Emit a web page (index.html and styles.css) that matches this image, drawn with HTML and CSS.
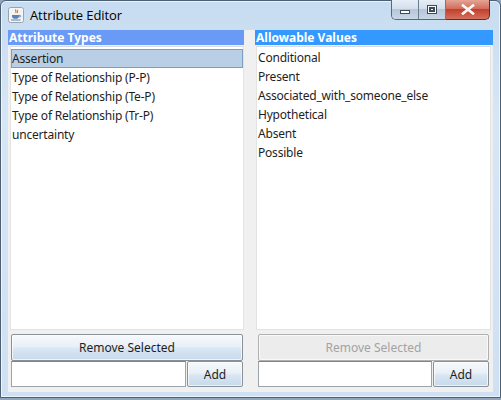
FILE: index.html
```html
<!DOCTYPE html>
<html>
<head>
<meta charset="utf-8">
<link rel="stylesheet" href="styles.css">
</head>
<body>
<div class="window">
  <div class="titlebar">
    <div class="app-icon">
      <svg width="16" height="16" viewBox="0 0 16 16">
        <rect x="0.5" y="0.5" width="15" height="15" rx="2" fill="#f4f4f4" stroke="#9aa4ae"/>
        <path d="M8 2.5c-1.5 1.2 1 2-0.3 3.6M9.6 3c-1 1 0.8 1.6-0.2 2.8" stroke="#e07020" stroke-width="1.1" fill="none"/>
        <path d="M4 8h7v1.2c0 1.6-1.4 2.6-3.5 2.6S4 10.8 4 9.2z" fill="#5a82b8"/>
        <path d="M11 8.4h1c1 0 1 1.6 0 1.6h-1" stroke="#5a82b8" stroke-width="0.9" fill="none"/>
        <path d="M3 13h9.5" stroke="#5a82b8" stroke-width="1"/>
      </svg>
    </div>
    <div class="title">Attribute Editor</div>
    <div class="caption-buttons">
      <div class="cap-group">
        <div class="cap-btn cap-min"><span class="min-glyph"></span></div>
        <div class="cap-btn cap-max"><span class="max-glyph"></span></div>
      </div>
      <div class="cap-close">
        <svg width="14" height="11" viewBox="0 0 14 11">
          <path d="M2 1.5l10 8M12 1.5l-10 8" stroke="#fff" stroke-width="2.6" stroke-linecap="square"/>
          <path d="M2 1.5l10 8M12 1.5l-10 8" stroke="#f4f4f4" stroke-width="1.4"/>
        </svg>
      </div>
    </div>
  </div>
  <div class="client">
    <div class="panel panel-left">
      <div class="panel-header header-left">Attribute Types</div>
      <div class="list">
        <div class="row selected">Assertion</div>
        <div class="row">Type of Relationship (P-P)</div>
        <div class="row">Type of Relationship (Te-P)</div>
        <div class="row">Type of Relationship (Tr-P)</div>
        <div class="row">uncertainty</div>
      </div>
      <div class="controls">
        <button class="btn btn-remove">Remove Selected</button>
        <div class="add-row">
          <input class="field" type="text">
          <button class="btn btn-add">Add</button>
        </div>
      </div>
    </div>
    <div class="panel panel-right">
      <div class="panel-header header-right">Allowable Values</div>
      <div class="list list-right">
        <div class="row">Conditional</div>
        <div class="row">Present</div>
        <div class="row">Associated_with_someone_else</div>
        <div class="row">Hypothetical</div>
        <div class="row">Absent</div>
        <div class="row">Possible</div>
      </div>
      <div class="controls">
        <button class="btn btn-remove disabled">Remove Selected</button>
        <div class="add-row">
          <input class="field" type="text">
          <button class="btn btn-add">Add</button>
        </div>
      </div>
    </div>
  </div>
</div>
</body>
</html>
```

FILE: styles.css
```css
* { box-sizing: border-box; }
html, body {
  margin: 0;
  padding: 0;
  width: 501px;
  height: 400px;
  overflow: hidden;
  background: #8fa6bd;
  font-family: "Noto Sans", "DejaVu Sans", sans-serif;
}
.window {
  width: 501px;
  height: 398px;
  background: linear-gradient(180deg, #c7dcf1 0%, #d7e6f5 30%, #cfe0f2 100%);
  border: 1px solid #4d5f72;
  border-radius: 6px 6px 0 0;
  display: flex;
  flex-direction: column;
  box-shadow: inset 0 0 0 1px rgba(255,255,255,0.6);
}
.titlebar {
  height: 29px;
  display: flex;
  align-items: flex-start;
  padding-left: 7px;
  position: relative;
}
.app-icon {
  margin-top: 5px;
  width: 16px;
  height: 16px;
}
.title {
  margin-left: 6px;
  margin-top: 5px;
  font-family: "Open Sans", "Noto Sans", sans-serif;
  font-size: 13px;
  color: #000;
  letter-spacing: -0.1px;
}
.caption-buttons {
  position: absolute;
  top: -1px;
  right: 10px;
  display: flex;
  height: 20px;
}
.cap-group {
  display: flex;
  border: 1px solid #5a6878;
  border-top: none;
  border-right: none;
  border-radius: 0 0 0 5px;
  overflow: hidden;
}
.cap-btn {
  width: 27px;
  height: 19px;
  background: linear-gradient(180deg, #e6eef7 0%, #d3dfec 45%, #b7c7d9 50%, #c8d6e6 100%);
  border-right: 1px solid #6d7c8c;
  display: flex;
  align-items: center;
  justify-content: center;
}
.min-glyph {
  width: 10px;
  height: 4px;
  margin-top: 5px;
  background: #fff;
  border: 1px solid #3d4a58;
}
.max-glyph {
  width: 10px;
  height: 9px;
  background: #fff;
  border: 1px solid #3d4a58;
  box-shadow: inset 0 0 0 1px #fff, inset 0 0 0 3px #3d4a58;
}
.cap-close {
  width: 44px;
  height: 20px;
  background: linear-gradient(180deg, #e3a595 0%, #d26d5c 45%, #c2402d 50%, #d5705c 100%);
  border: 1px solid #5a3028;
  border-top: none;
  border-left: none;
  border-radius: 0 0 5px 0;
  display: flex;
  align-items: center;
  justify-content: center;
}
.client {
  margin: 0 7px;
  height: 362px;
  background: #f0f0f0;
  display: grid;
  grid-template-columns: 236px 238px;
  column-gap: 11px;
  border: 0;
}
.panel {
  display: flex;
  flex-direction: column;
  min-height: 0;
}
.panel-header {
  height: 15px;
  color: #fff;
  font-weight: bold;
  font-size: 12px;
  line-height: 15px;
  padding-left: 1px;
  white-space: nowrap;
}
.header-left { background: #699af5; }
.header-right { background: #3399ff; }
.list {
  flex: 1;
  margin: 1px 0 4px 2px;
  background: #fff;
  border: 1px solid #e3e3e3;
  border-top: 1px solid #d9d9d9;
  padding: 2px 0 0 0;
  font-size: 12px;
  letter-spacing: -0.2px;
  color: #1e1e1e;
}
.list-right {
  margin: 1px 2px 4px 1px;
  padding-top: 1px;
}
.row {
  height: 19px;
  line-height: 17px;
  padding-left: 0;
  border: 1px solid transparent;
  white-space: nowrap;
}
.selected {
  background: #b8cfe5;
  border-color: #7f9cc3;
}
.controls {
  display: flex;
  flex-direction: column;
  padding: 0 1px 5px 3px;
}
.panel-right .controls { padding: 0 4px 5px 3px; }
.btn {
  font-family: "Noto Sans", "DejaVu Sans", sans-serif;
  font-size: 12px;
  color: #1e1e1e;
  border: 1px solid #8a9097;
  border-radius: 2px;
  background: linear-gradient(180deg, #f6f9fc 0%, #e9f0f7 45%, #d9e6f2 55%, #c6d9ec 100%);
  box-shadow: inset 0 0 0 1px rgba(255,255,255,0.7);
  padding: 0;
  margin: 0;
}
.btn-remove {
  height: 27px;
  width: 100%;
}
.btn.disabled {
  background: #ececec;
  color: #a3a3a3;
  border-color: #b0b0b0;
}
.add-row {
  display: flex;
  height: 26px;
}
.field {
  flex: 1;
  min-width: 0;
  height: 26px;
  margin: 0 1px 0 0;
  border: 1px solid #9da3a9;
  border-top-color: #7f858c;
  background: #fff;
  padding: 0;
}
.btn-add {
  width: 56px;
  height: 26px;
}
```
